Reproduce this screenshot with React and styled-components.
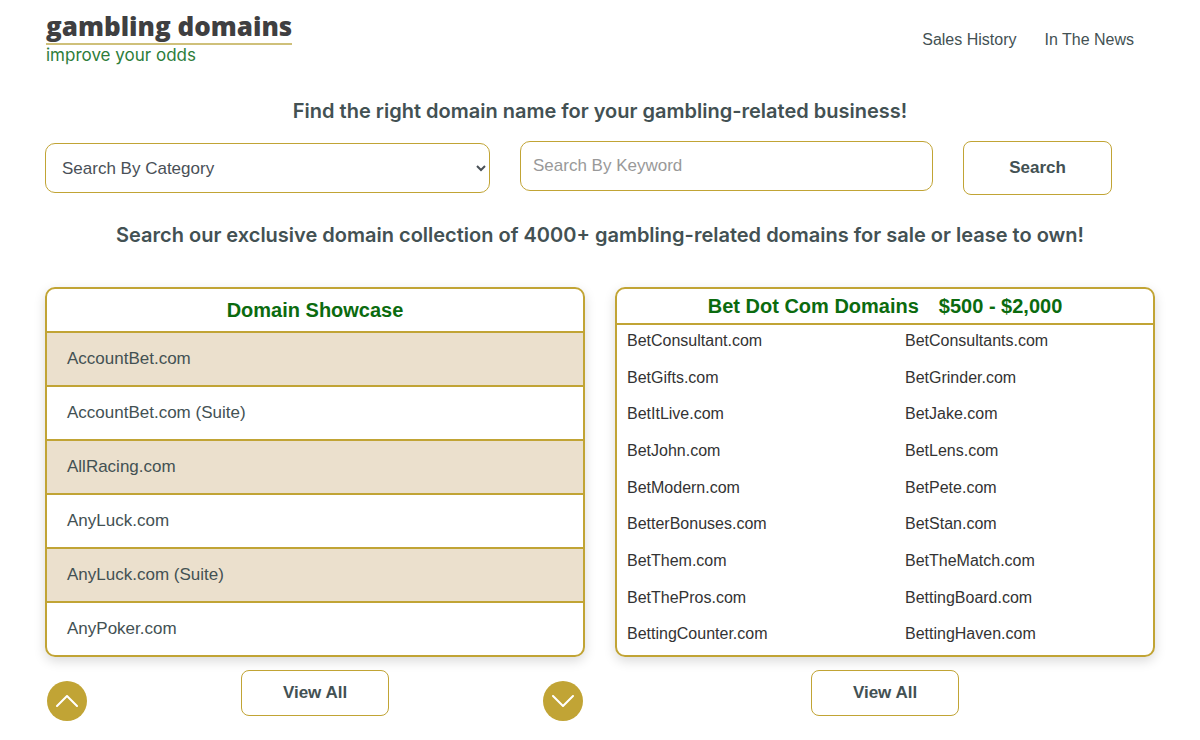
import React from 'react'
import styled, { createGlobalStyle } from 'styled-components'

const showcase = [
    'AccountBet.com',
    'AccountBet.com (Suite)',
    'AllRacing.com',
    'AnyLuck.com',
    'AnyLuck.com (Suite)',
    'AnyPoker.com',
]

const betDomains = [
    'BetConsultant.com', 'BetConsultants.com',
    'BetGifts.com', 'BetGrinder.com',
    'BetItLive.com', 'BetJake.com',
    'BetJohn.com', 'BetLens.com',
    'BetModern.com', 'BetPete.com',
    'BetterBonuses.com', 'BetStan.com',
    'BetThem.com', 'BetTheMatch.com',
    'BetThePros.com', 'BettingBoard.com',
    'BettingCounter.com', 'BettingHaven.com',
]

const Chevron = ({ up }) => (
    <svg width="22" height="12" viewBox="0 0 22 12" fill="none" stroke="#fff" strokeWidth="2" strokeLinecap="round" strokeLinejoin="round" aria-hidden="true">
        <path d={up ? 'M1 11L11 1L21 11' : 'M1 1L11 11L21 1'} />
    </svg>
)

const App = () => {
    return (
        <>
            <GlobalStyle />
            <Container>
                <Header>
                    <Logo href="#">
                        <LogoName>gambling domains</LogoName>
                        <LogoTagline>improve your odds</LogoTagline>
                    </Logo>
                    <Nav>
                        <NavLink href="#">Sales History</NavLink>
                        <NavLink href="#">In The News</NavLink>
                    </Nav>
                </Header>
                <main>
                    <Headline as="h1">Find the right domain name for your gambling-related business!</Headline>
                    <SearchForm onSubmit={(e) => e.preventDefault()}>
                        <CategorySelect aria-label="Search By Category">
                            <option>Search By Category</option>
                        </CategorySelect>
                        <KeywordInput type="text" aria-label="Search By Keyword" placeholder="Search By Keyword" />
                        <SearchButton type="submit">Search</SearchButton>
                    </SearchForm>
                    <Headline>Search our exclusive domain collection of 4000+ gambling-related domains for sale or lease to own!</Headline>
                    <Columns>
                        <Card>
                            <CardTitle $height="44px">Domain Showcase</CardTitle>
                            <ShowcaseList>
                                {showcase.map((name) => (
                                    <ShowcaseItem key={name}>
                                        <ShowcaseLink href="#">{name}</ShowcaseLink>
                                    </ShowcaseItem>
                                ))}
                            </ShowcaseList>
                        </Card>
                        <Card>
                            <CardTitle $height="36px">
                                <span>Bet Dot Com Domains</span>
                                <span>$500 - $2,000</span>
                            </CardTitle>
                            <DomainList>
                                {betDomains.map((name) => (
                                    <li key={name}>
                                        <DomainLink href="#">{name}</DomainLink>
                                    </li>
                                ))}
                            </DomainList>
                        </Card>
                        <CardFooter $justify="space-between">
                            <RoundButton type="button" aria-label="Previous"><Chevron up /></RoundButton>
                            <ViewAll href="#">View All</ViewAll>
                            <RoundButton type="button" aria-label="Next"><Chevron /></RoundButton>
                        </CardFooter>
                        <CardFooter $justify="center">
                            <ViewAll href="#">View All</ViewAll>
                        </CardFooter>
                    </Columns>
                </main>
            </Container>
        </>
    )
}

export default App

const gold = '#c1a435';
const slate = '#435153';

const GlobalStyle = createGlobalStyle`
    * {
        box-sizing: border-box;
    }
    body {
        margin: 0;
        background-color: white;
        color: ${slate};
        font-family: "Liberation Sans", Arial, sans-serif;
        font-size: 16px;
    }
    a {
        color: inherit;
        text-decoration: none;
    }
    ul {
        list-style: none;
        margin: 0;
        padding: 0;
    }
`;

const Container = styled.div`
    max-width: 1200px;
    margin: 0 auto;
    padding: 0 45px;
`;
const Header = styled.header`
    display: flex;
    align-items: center;
    justify-content: space-between;
    height: 80px;
`;
const Logo = styled.a`
    display: flex;
    flex-direction: column;
    padding: 0 0 2px 1px;
`;
const LogoName = styled.span`
    padding-bottom: 4px;
    font-family: "Open Sans", "Noto Sans", sans-serif;
    font-size: 26px;
    font-weight: 800;
    line-height: 26px;
    color: #3f3f41;
    border-bottom: 2px solid #cfc07a;
`;
const LogoTagline = styled.span`
    font-family: Inter, sans-serif;
    font-size: 17px;
    line-height: 20px;
    color: #2d7d3a;
`;
const Nav = styled.nav`
    display: flex;
    gap: 28px;
    padding-right: 21px;
`;
const NavLink = styled.a`
    line-height: 24px;
`;
const Headline = styled.h2`
    margin: 0;
    padding: 16px 0 15px;
    font-family: Inter, sans-serif;
    font-size: 20px;
    font-weight: 600;
    line-height: 30px;
    text-align: center;
`;
const SearchForm = styled.form`
    display: grid;
    grid-template-columns: 445fr 413fr 149fr;
    align-items: start;
    gap: 30px;
    padding: 0 43px 9px 0;
`;
const CategorySelect = styled.select`
    width: 100%;
    height: 50px;
    margin-top: 2px;
    padding: 0 0 0 12px;
    border: 1px solid ${gold};
    border-radius: 10px;
    background-color: white;
    color: #495057;
    font: 17px "Liberation Sans", Arial, sans-serif;
`;
const KeywordInput = styled.input`
    width: 100%;
    height: 50px;
    padding: 0 12px;
    border: 1px solid ${gold};
    border-radius: 10px;
    color: #495057;
    font: 17px "Liberation Sans", Arial, sans-serif;

    &::placeholder {
        color: #999;
    }
`;
const SearchButton = styled.button`
    height: 54px;
    border: 1px solid ${gold};
    border-radius: 8px;
    background-color: white;
    color: ${slate};
    font: bold 17px "Liberation Sans", Arial, sans-serif;
    cursor: pointer;
`;
const Columns = styled.div`
    display: grid;
    grid-template-columns: 1fr 1fr;
    column-gap: 30px;
    row-gap: 13px;
    padding: 22px 0 20px;
`;
const Card = styled.section`
    display: flex;
    flex-direction: column;
    overflow: hidden;
    border: 2px solid ${gold};
    border-radius: 10px;
    box-shadow: 0 4px 12px rgba(0, 0, 0, 0.15);
`;
const CardTitle = styled.h3`
    display: flex;
    align-items: center;
    justify-content: center;
    gap: 20px;
    height: ${(props) => props.$height};
    margin: 0;
    border-bottom: 2px solid ${gold};
    color: #0b6b0f;
    font-size: 20px;
    font-weight: bold;
`;
const ShowcaseList = styled.ul`
    font-size: 17px;
`;
const ShowcaseItem = styled.li`
    border-bottom: 2px solid ${gold};

    &:nth-child(odd) {
        background-color: #ebe0cd;
    }
    &:last-child {
        border-bottom: none;
    }
`;
const ShowcaseLink = styled.a`
    display: block;
    padding: 0 20px;
    line-height: 52px;
`;
const DomainList = styled.ul`
    flex: 1;
    display: grid;
    grid-template-columns: 278fr 248fr;
    grid-auto-rows: 1fr;
    padding-left: 10px;
    color: #333;
    line-height: 32px;
`;
const DomainLink = styled.a`
    display: block;
`;
const CardFooter = styled.div`
    display: flex;
    align-items: flex-start;
    justify-content: ${(props) => props.$justify};
    padding: 0 2px;
`;
const ViewAll = styled.a`
    width: 148px;
    border: 1px solid ${gold};
    border-radius: 8px;
    font-size: 17px;
    font-weight: bold;
    line-height: 44px;
    text-align: center;
`;
const RoundButton = styled.button`
    display: flex;
    align-items: center;
    justify-content: center;
    width: 40px;
    height: 40px;
    margin-top: 11px;
    padding: 0;
    border: none;
    border-radius: 50%;
    background-color: ${gold};
    cursor: pointer;
`;
